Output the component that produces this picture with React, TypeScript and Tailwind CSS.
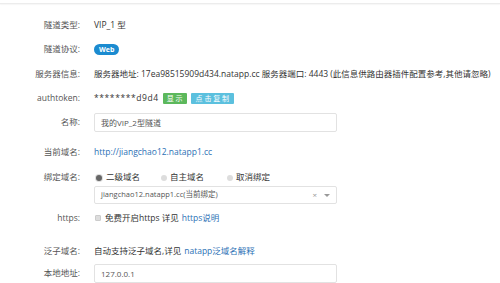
const font = { fontFamily: '"Open Sans", "Noto Sans CJK SC", sans-serif' }

function Row({ label, className, children }: { label: string, className: string, children?: React.ReactNode }) {
  return (
    <div className={`flex items-center ${className}`}>
      <div className="w-[80px] shrink-0 text-right text-[#555]">{label}</div>
      <div className="ml-[14px] flex items-center text-[#333] whitespace-nowrap">{children}</div>
    </div>
  )
}

function Radio({ checked, label, className }: { checked?: boolean, label: string, className?: string }) {
  return (
    <span className={`flex items-center ${className ?? ''}`}>
      <span className={`w-[6px] h-[6px] rounded-full ${checked ? 'bg-[#666] ring-1 ring-[#ddd]' : 'bg-[#ddd]'}`} />
      <span className={checked ? 'ml-[4px]' : 'ml-[3px]'}>{label}</span>
    </span>
  )
}

export default function App() {
  return (
    <div className="w-[500px] h-[283px] bg-white overflow-hidden text-[8.5px] leading-none" style={font}>
      <div className="pt-[3px]">
        <div className="border-t border-[#ececec] shadow-[0_1px_1px_#f6f6f6]" />
      </div>

      <Row label="隧道类型:" className="mt-[9px] h-[24px]">VIP_1 型</Row>

      <Row label="隧道协议:" className="h-[25px]">
        <span className="bg-[#1b8bd0] text-white font-bold text-[7px] rounded-full px-[5px] py-[2px]">Web</span>
      </Row>

      <Row label="服务器信息:" className="h-[24px]">
        服务器地址: 17ea98515909d434.natapp.cc 服务器端口: 4443 (此信息供路由器插件配置参考,其他请忽略)
      </Row>

      <Row label="authtoken:" className="h-[24px]">
        <span className="tracking-[0.6px]">********d9d4</span>
        <span className="ml-[4px] bg-[#5cb85c] text-white text-[7px] px-[4px] py-[2px] rounded-[1px]">显 示</span>
        <span className="ml-[4px] bg-[#5bc0de] text-white text-[7px] px-[5px] py-[2px] rounded-[1px]">点 击 复 制</span>
      </Row>

      <Row label="名称:" className="h-[25px]">
        <div className="w-[243px] h-[19px] border border-[#e2e2e2] rounded-[2px] flex items-center px-[6px] text-[8px] text-[#555]">
          我的VIP_2型隧道
        </div>
      </Row>

      <Row label="当前域名:" className="h-[34px]">
        <span className="text-[#2c71b5]">http://jiangchao12.natapp1.cc</span>
      </Row>

      <Row label="绑定域名:" className="h-[17px]">
        <Radio checked label="二级域名" className="ml-[2px]" />
        <Radio label="自主域名" className="ml-[21px]" />
        <Radio label="取消绑定" className="ml-[23px]" />
      </Row>

      <div className="flex">
        <div className="w-[94px] shrink-0" />
        <div className="w-[243px] h-[18px] border border-[#e2e2e2] rounded-[2px] flex items-center pl-[6px] pr-[6px] text-[7.5px] text-[#555]">
          <span className="flex-1">jiangchao12.natapp1.cc(当前绑定)</span>
          <span className="text-[8px] text-[#999]">×</span>
          <span className="ml-[7px] w-0 h-0 border-l-[3px] border-r-[3px] border-t-[3px] border-l-transparent border-r-transparent border-t-[#999]" />
        </div>
      </div>

      <Row label="https:" className="h-[28px]">
        <span className="ml-[1px] w-[6px] h-[6px] bg-[#ddd] border border-[#ccc] rounded-[1px]" />
        <span className="ml-[4px]">免费开启https 详见</span>
        <span className="ml-[3px] text-[#2c71b5]">https说明</span>
      </Row>

      <Row label="泛子域名:" className="mt-[8px] h-[22px]">
        <span>自动支持泛子域名,详见</span>
        <span className="ml-[3px] text-[#2c71b5]">natapp泛域名解释</span>
      </Row>

      <Row label="本地地址:" className="mt-[2px] h-[19px]">
        <div className="w-[243px] h-[19px] border border-[#e2e2e2] rounded-[2px] flex items-center px-[6px] text-[8px] text-[#555]">
          127.0.0.1
        </div>
      </Row>
    </div>
  )
}
